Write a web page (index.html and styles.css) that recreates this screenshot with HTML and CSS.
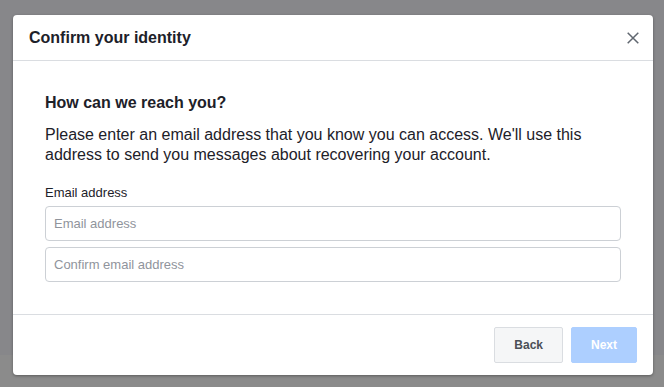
FILE: index.html
```html
<!DOCTYPE html>
<html>
<head>
<meta charset="utf-8">
<link rel="stylesheet" href="styles.css">
</head>
<body>
<div class="backdrop">
  <div class="dialog">
    <div class="header">
      <span class="title">Confirm your identity</span>
      <button class="close" aria-label="Close">
        <svg width="12" height="12" viewBox="0 0 12 12"><path d="M0.7 0.7 L11.3 11.3 M11.3 0.7 L0.7 11.3" stroke="#606770" stroke-width="1.5" fill="none"/></svg>
      </button>
    </div>
    <div class="body">
      <h2 class="heading">How can we reach you?</h2>
      <p class="text">Please enter an email address that you know you can access. We'll use this address to send you messages about recovering your account.</p>
      <label class="label">Email address</label>
      <input class="input" type="text" placeholder="Email address">
      <input class="input second" type="text" placeholder="Confirm email address">
    </div>
    <div class="footer">
      <button class="btn back">Back</button>
      <button class="btn next">Next</button>
    </div>
  </div>
  <div class="band"></div>
</div>
</body>
</html>
```

FILE: styles.css
```css
* { box-sizing: border-box; }
html, body { margin: 0; padding: 0; }
body {
  width: 664px;
  height: 387px;
  overflow: hidden;
  background: #87878a;
  font-family: "Liberation Sans", Arial, sans-serif;
  color: #1d2129;
}
.backdrop {
  position: relative;
  height: 387px;
  padding: 15px 11px 0 13px;
}
.band {
  position: absolute;
  left: 0;
  right: 0;
  top: 355px;
  bottom: 0;
  background: #8b8b8b;
  z-index: 0;
}
.dialog {
  position: relative;
  z-index: 1;
  width: 640px;
  height: 360px;
  background: #fff;
  border-radius: 4px;
  box-shadow: 0 1px 3px rgba(0,0,0,0.35);
  display: flex;
  flex-direction: column;
}
.header {
  height: 46px;
  padding: 0 14px 0 16px;
  border-bottom: 1px solid #dadde1;
  display: flex;
  align-items: center;
  justify-content: space-between;
}
.title {
  font-size: 16px;
  font-weight: bold;
  line-height: 20px;
  color: #1d2129;
  padding-top: 1px;
}
.close {
  border: 0;
  background: none;
  padding: 0;
  width: 12px;
  height: 12px;
  display: flex;
  margin-top: 1px;
}
.body {
  padding: 32px 32px 32px 32px;
  border-bottom: 1px solid #dadde1;
  display: flex;
  flex-direction: column;
}
.heading {
  margin: 0;
  font-size: 16px;
  font-weight: bold;
  line-height: 20px;
  color: #1d2129;
}
.text {
  margin: 12px 0 0;
  font-size: 16px;
  line-height: 20px;
  color: #1d2129;
}
.label {
  margin-top: 20px;
  font-size: 13px;
  line-height: 16px;
  color: #1d2129;
}
.input {
  margin-top: 5px;
  height: 35px;
  width: 576px;
  border: 1px solid #ccd0d5;
  border-radius: 4px;
  padding: 0 8px;
  font-family: "Liberation Sans", Arial, sans-serif;
  font-size: 13px;
  color: #1d2129;
  background: #fff;
  outline: none;
}
.input.second { margin-top: 6px; }
.input::placeholder { color: #90949c; }
.footer {
  padding: 12px 16px;
  display: flex;
  justify-content: flex-end;
  gap: 8px;
}
.btn {
  height: 36px;
  padding: 0 19px;
  border-radius: 2px;
  font-family: "Liberation Sans", Arial, sans-serif;
  font-size: 12px;
  font-weight: bold;
  line-height: 16px;
}
.back {
  background: #f5f6f7;
  border: 1px solid #dadde1;
  color: #4b4f56;
}
.next {
  background: #adcfff;
  border: 1px solid #adcfff;
  color: #fff;
}
```
